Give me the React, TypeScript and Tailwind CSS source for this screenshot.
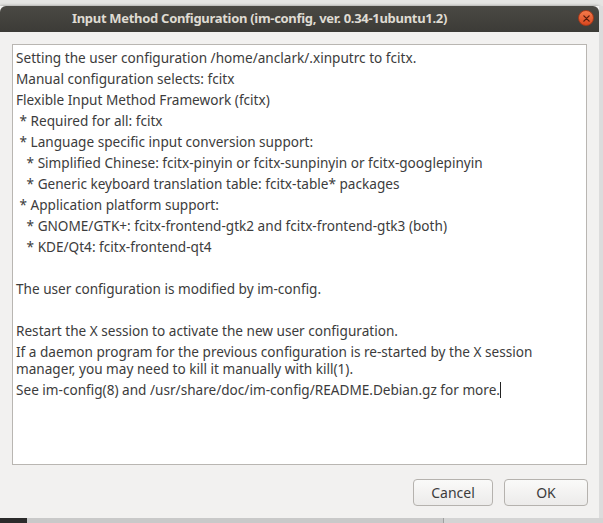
import React from 'react';

const lines: string[] = [
  'Setting the user configuration /home/anclark/.xinputrc to fcitx.',
  'Manual configuration selects: fcitx',
  'Flexible Input Method Framework (fcitx)',
  ' * Required for all: fcitx',
  ' * Language specific input conversion support:',
  '   * Simplified Chinese: fcitx-pinyin or fcitx-sunpinyin or fcitx-googlepinyin',
  '   * Generic keyboard translation table: fcitx-table* packages',
  ' * Application platform support:',
  '   * GNOME/GTK+: fcitx-frontend-gtk2 and fcitx-frontend-gtk3 (both)',
  '   * KDE/Qt4: fcitx-frontend-qt4',
  '',
  'The user configuration is modified by im-config.',
  '',
  'Restart the X session to activate the new user configuration.',
  'If a daemon program for the previous configuration is re-started by the X session manager, you may need to kill it manually with kill(1).',
];

export default function App() {
  return (
    <div className="w-[603px] h-[523px] overflow-hidden bg-[#cfcfcf] flex flex-col" style={{ fontFamily: '"Noto Sans", "DejaVu Sans", sans-serif' }}>
      <div className="h-[6px] shrink-0 bg-[#e4e4e2]" />
      <div className="flex">
        <div className="w-[599px] flex flex-col bg-[#f2f1f0] shadow-[0_0_3px_rgba(0,0,0,0.4)]">
          <div className="h-[26px] relative flex items-center justify-center rounded-t-[6px] bg-gradient-to-b from-[#4a4944] to-[#3c3b37]">
            <span className="text-[13px] font-bold text-[#dfdbd2] mr-[80px] tracking-[-0.3px]">
              Input Method Configuration (im-config, ver. 0.34-1ubuntu1.2)
            </span>
            <div className="absolute right-[5px] top-[4px] w-[16px] h-[16px] rounded-full bg-gradient-to-b from-[#f57a4a] to-[#d9471f] border border-[#a83a1a] flex items-center justify-center">
              <svg width="7" height="7" viewBox="0 0 8 8">
                <path d="M1 1 L7 7 M7 1 L1 7" stroke="#5a1d0c" strokeWidth="1.6" strokeLinecap="round" />
              </svg>
            </div>
          </div>
          <div className="pt-[12px] px-[12px]">
            <div className="h-[421px] bg-white border border-[#b9b6b2] pl-[3px] pr-[8px] text-[13.6px] text-[#3c3c3c] leading-[17px]">
              {lines.map((l, i) => (
                <div key={i} className="mt-[4px] whitespace-pre-wrap min-h-[17px]">
                  {l}
                </div>
              ))}
              <div className="mt-[4px] whitespace-pre-wrap">
                See im-config(8) and /usr/share/doc/im-config/README.Debian.gz for more.
                <span className="inline-block w-[1px] h-[16px] bg-[#222] align-[-3px]" />
              </div>
            </div>
          </div>
          <div className="flex justify-end gap-[11px] pt-[14px] pb-[12px] pr-[11px]">
            <button className="w-[80px] h-[27px] rounded-[4px] border border-[#b5b2ae] bg-gradient-to-b from-[#fafaf9] to-[#ecebea] text-[14px] text-[#3c3c3c]">
              Cancel
            </button>
            <button className="w-[84px] h-[27px] rounded-[4px] border border-[#b5b2ae] bg-gradient-to-b from-[#fafaf9] to-[#ecebea] text-[14px] text-[#3c3c3c]">
              OK
            </button>
          </div>
        </div>
        <div className="flex-1 bg-[#dcdcdc]" />
      </div>
      <div className="flex-1 flex">
        <div className="w-[27px] bg-[#2b2b2b]" />
        <div className="w-[416px] bg-[#c9c9c9]" />
        <div className="flex-1 bg-[#d4d4d4] border-l border-[#a0a0a0]" />
      </div>
    </div>
  );
}
